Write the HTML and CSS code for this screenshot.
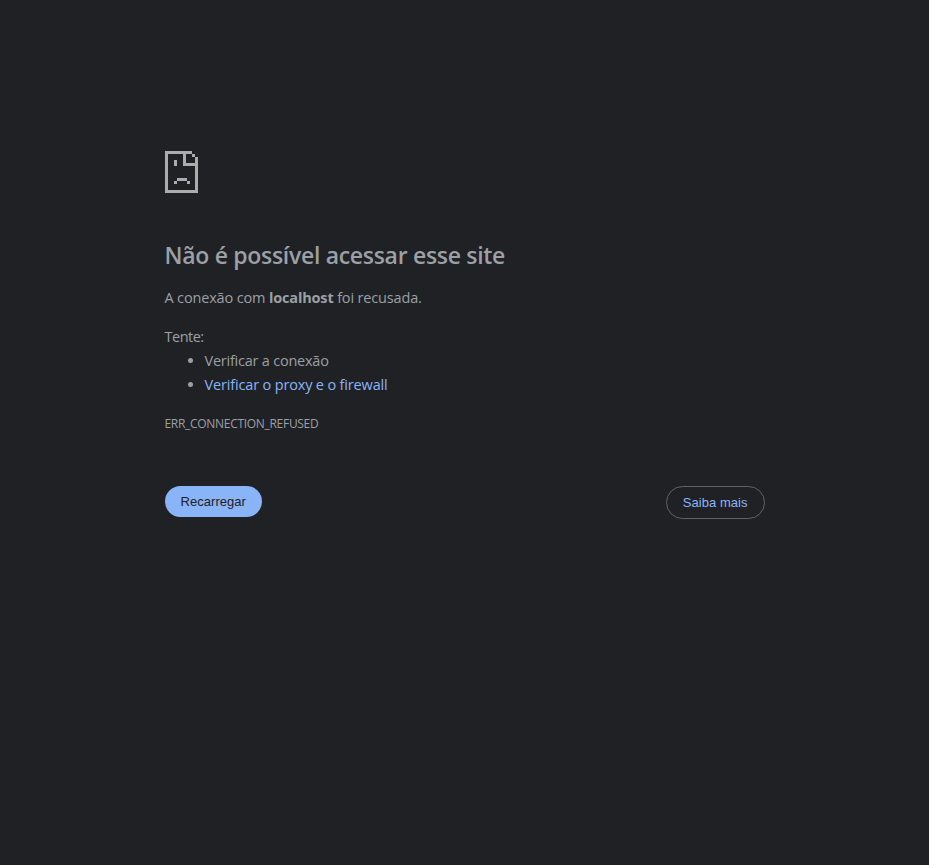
FILE: index.html
```html
<!DOCTYPE html>
<html lang="pt-BR">
<head>
<meta charset="utf-8">
<title>localhost</title>
<link rel="stylesheet" href="styles.css">
</head>
<body>
<main class="page">
  <svg class="icon" width="33" height="42" viewBox="0 0 33 42" shape-rendering="crispEdges" aria-hidden="true">
    <path d="M0 0H27V3H21V12H30V6H33V42H0ZM3 3V39H30V15H18V3ZM27 3H30V6H27ZM9 9H12V15H9ZM12 27H22V30H12ZM9 30H12V33H9ZM22 30H25V33H22Z" fill-rule="evenodd"/>
  </svg>
  <h1 class="title">Não é possível acessar esse site</h1>
  <p class="summary">A conexão com <strong>localhost</strong> foi recusada.</p>
  <div class="suggestions">
    <p class="try">Tente:</p>
    <ul class="list">
      <li class="check">Verificar a conexão</li>
      <li><a class="link" href="#">Verificar o proxy e o firewall</a></li>
    </ul>
  </div>
  <p class="code">ERR_CONNECTION_REFUSED</p>
  <div class="actions">
    <button class="button primary">Recarregar</button>
    <button class="button secondary">Saiba mais</button>
  </div>
</main>
</body>
</html>
```
FILE: styles.css
```css
body {
  margin: 0;
  background: #202124;
  color: #9aa0a6;
  font: 14.5px/24px "Open Sans", sans-serif;
  letter-spacing: -0.16px;
}
.page {
  width: 600px;
  margin: 0 auto;
  padding-top: 151px;
}
.icon {
  display: block;
  fill: #acacac;
}
.title {
  margin: 47px 0 16px;
  font-size: 23px;
  font-weight: 600;
  line-height: 30px;
  letter-spacing: -0.3px;
  white-space: nowrap;
}
.summary, .try, .code { margin: 0; }
.suggestions { margin-top: 15px; }
.try { letter-spacing: -0.5px; }
.check { letter-spacing: -0.23px; }
.list {
  margin: 0;
  padding-left: 40px;
}
.link {
  color: #8ab4f8;
  text-decoration: none;
}
.code {
  margin-top: 15px;
  font-size: 12px;
  letter-spacing: -0.3px;
}
.actions {
  display: flex;
  justify-content: space-between;
  align-items: flex-start;
  margin-top: 50px;
}
.button {
  height: 31px;
  padding: 0 16px;
  border: 0;
  border-radius: 20px;
  background: #8ab4f8;
  color: #202124;
  font: 13px/16px "Liberation Sans", Arial, sans-serif;
  letter-spacing: 0.04px;
}
.secondary {
  height: 33px;
  border: 1px solid #5f6368;
  background: none;
  color: #8ab4f8;
}
```
